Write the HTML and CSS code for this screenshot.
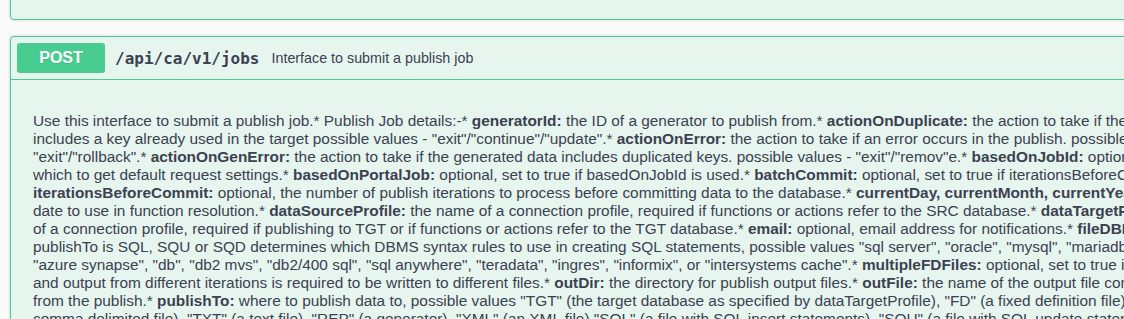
FILE: index.html
```html
<!DOCTYPE html>
<html lang="en">
<head>
    <meta charset="UTF-8">
    <title>Jobs API</title>
    <link rel="stylesheet" href="styles.css">
</head>
<body>
    <div class="operations">
        <div class="opblock opblock-prev"></div>

        <div class="opblock">
            <div class="opblock-summary">
                <span class="method">POST</span>
                <span class="path">/api/ca/v1/jobs</span>
                <span class="summary-text">Interface to submit a publish job</span>
            </div>
            <div class="opblock-body">
                <p class="markdown">
                    Use this interface to submit a publish job.* Publish Job details:-* <strong>generatorId:</strong> the ID of a generator to publish from.* <strong>actionOnDuplicate:</strong> the action to take if the generated data<br>
                    includes a key already used in the target possible values - "exit"/"continue"/"update".* <strong>actionOnError:</strong> the action to take if an error occurs in the publish. possible values -<br>
                    "exit"/"rollback".* <strong>actionOnGenError:</strong> the action to take if the generated data includes duplicated keys. possible values - "exit"/"remov"e.* <strong>basedOnJobId:</strong> optional, the ID of a job from<br>
                    which to get default request settings.* <strong>basedOnPortalJob:</strong> optional, set to true if basedOnJobId is used.* <strong>batchCommit:</strong> optional, set to true if iterationsBeforeCommit is used.*<br>
                    <strong>iterationsBeforeCommit:</strong> optional, the number of publish iterations to process before committing data to the database.* <strong>currentDay, currentMonth, currentYear:</strong> optional, the<br>
                    date to use in function resolution.* <strong>dataSourceProfile:</strong> the name of a connection profile, required if functions or actions refer to the SRC database.* <strong>dataTargetProfile:</strong> the name<br>
                    of a connection profile, required if publishing to TGT or if functions or actions refer to the TGT database.* <strong>email:</strong> optional, email address for notifications.* <strong>fileDBMS:</strong> optional, if<br>
                    publishTo is SQL, SQU or SQD determines which DBMS syntax rules to use in creating SQL statements, possible values "sql server", "oracle", "mysql", "mariadb", "postgres",<br>
                    "azure synapse", "db", "db2 mvs", "db2/400 sql", "sql anywhere", "teradata", "ingres", "informix", or "intersystems cache".* <strong>multipleFDFiles:</strong> optional, set to true if publishing to FD<br>
                    and output from different iterations is required to be written to different files.* <strong>outDir:</strong> the directory for publish output files.* <strong>outFile:</strong> the name of the output file containing output<br>
                    from the publish.* <strong>publishTo:</strong> where to publish data to, possible values "TGT" (the target database as specified by dataTargetProfile), "FD" (a fixed definition file), "CSV" (a<br>
                    comma delimited file), "TXT" (a text file), "REP" (a generator), "XML" (an XML file) "SQL" (a file with SQL insert statements), "SQU" (a file with SQL update statements),<br>
                    "SQD" (a file with SQL delete statements).* <strong>requestId:</strong> optional, an identifier for the request.
                </p>
            </div>
        </div>
    </div>
</body>
</html>
```

FILE: styles.css
```css
html, body {
    overflow: hidden;
}

body {
    margin: 0;
    background: #fafafa;
    font-family: "Liberation Sans", Arial, sans-serif;
    color: #3b4151;
}

.operations {
    width: 1700px;
    padding: 0 10px;
}

.opblock {
    border: 1px solid #49cc90;
    border-radius: 4px;
    background: rgba(73, 204, 144, .1);
    box-shadow: 0 0 3px rgba(0, 0, 0, .19);
    margin-bottom: 16px;
}

.opblock-prev {
    height: 48px;
    margin-top: -30px;
}

.opblock-summary {
    display: flex;
    align-items: center;
    padding: 6px 6px;
    border-bottom: 1px solid #49cc90;
}

.method {
    box-sizing: border-box;
    width: 88px;
    height: 30px;
    line-height: 30px;
    text-align: center;
    border-radius: 3px;
    background: #49cc90;
    color: #fff;
    font-size: 16px;
    font-weight: 700;
    text-shadow: 0 1px 0 rgba(0, 0, 0, .1);
}

.path {
    padding: 0 10px;
    font-family: "DejaVu Sans Mono", monospace;
    font-size: 16px;
    font-weight: 700;
    color: #3b4151;
}

.summary-text {
    padding-left: 2px;
    font-size: 14.3px;
    color: #3b4151;
}

.opblock-body {
    padding: 32px 20px 20px 22px;
}

.markdown {
    margin: 0;
    font-size: 15.4px;
    line-height: 18px;
    white-space: nowrap;
}
```
